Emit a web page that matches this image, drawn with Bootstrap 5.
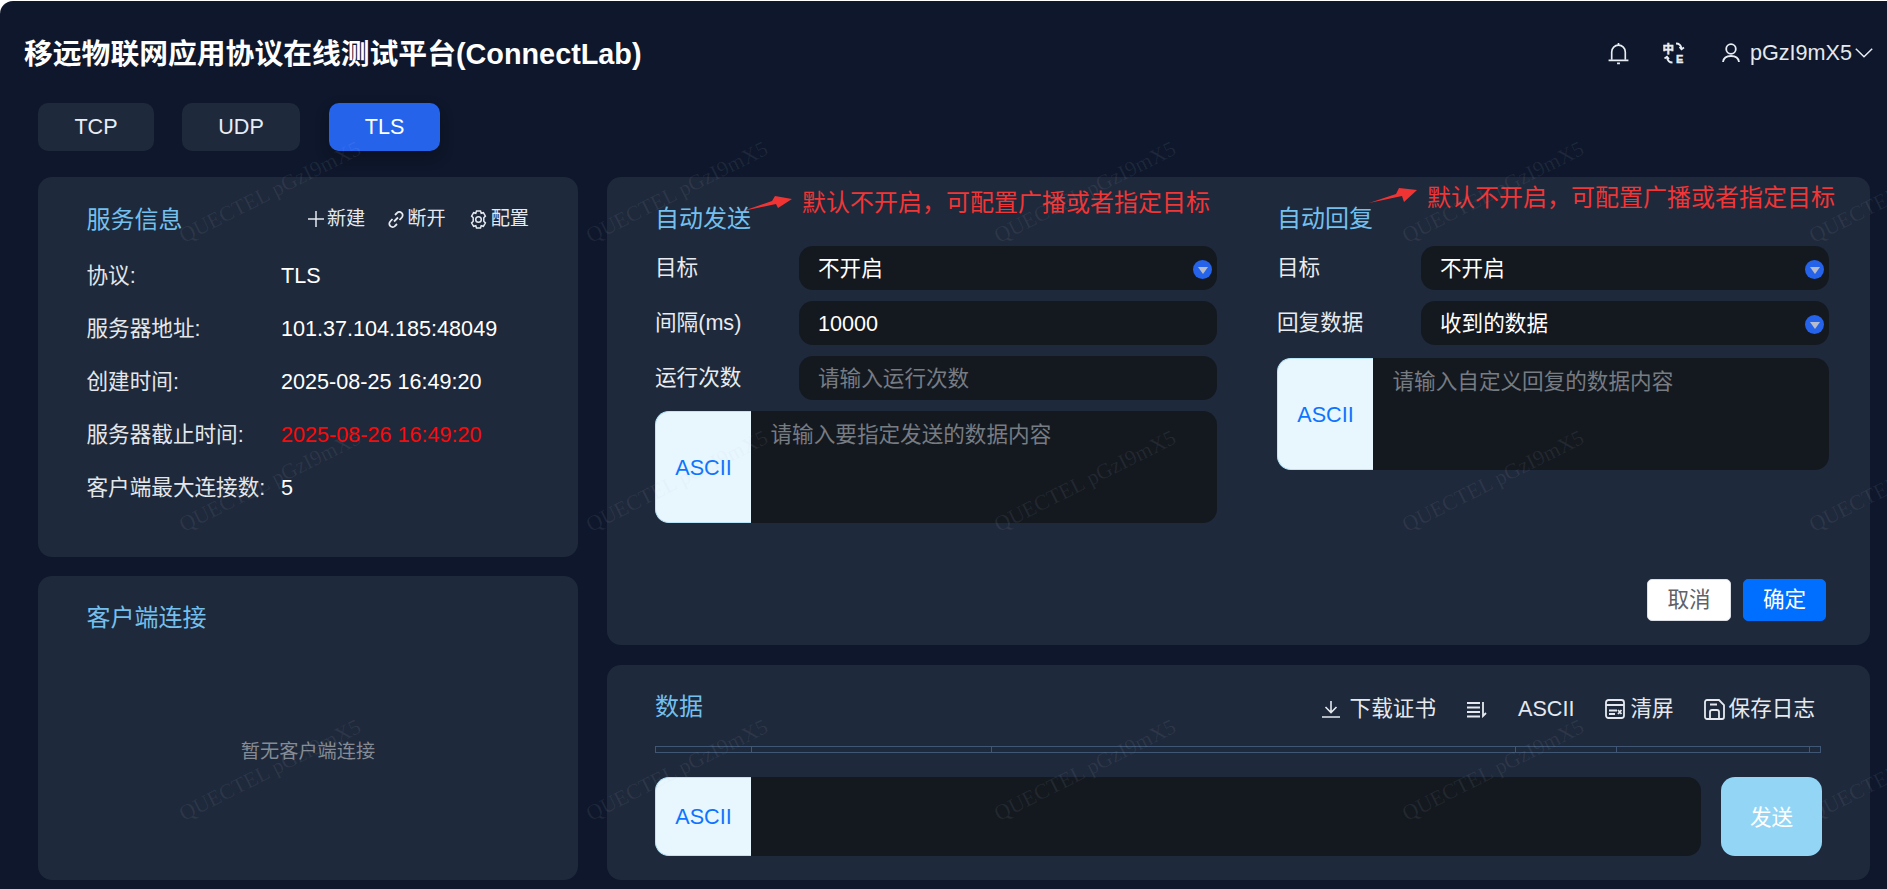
<!DOCTYPE html>
<html lang="zh-CN">
<head>
<meta charset="utf-8">
<title>ConnectLab</title>
<link href="https://cdn.jsdelivr.net/npm/bootstrap@5.3.0/dist/css/bootstrap.min.css" rel="stylesheet">
<style>
html,body{height:889px;overflow:hidden;background:#fff}
body{padding-top:1px;font-family:"Liberation Sans","Noto Sans CJK SC",sans-serif;font-size:21.6px;color:#e5e7eb}
.shell{position:relative;height:888px;background:#0e172b;border-top-left-radius:13px;overflow:hidden}
.topbar{height:102px;padding:2px 14px 0 24px}
.brand{font-size:28.8px;font-weight:700;color:#fff;line-height:1.2;margin:3px 0 0}
.topicons{color:#e8edf3;line-height:1}
.ic-bell{margin-right:34px}.ic-lang{margin-right:37px}.ic-user{margin-right:10px}.ic-chev{margin-left:3px}
.user-name{color:#e5e9ef}
.tabrow{height:48px;margin:0 0 26px 38px;gap:28px}
.proto{height:48px;border:0;border-radius:10px;background:#1e293b;color:#e8edf3;font-size:21.6px;padding:0;line-height:48px}
.proto.w1{width:116px}.proto.w2{width:118px}.proto.w3{width:111px;margin-left:1px;background:#2563eb;color:#fff;box-shadow:0 6px 14px rgba(0,0,0,.25)}
.proto:hover{background:#1e293b;color:#fff}.proto.w3:hover{background:#2563eb}
.stage{height:703px;padding:0 17px 0 38px;gap:29px}
.leftcol{width:540px;gap:19px}
.rightcol{gap:20px;min-width:0}
.panel{background:#1e293b;border-radius:14px;position:relative}
.p-info{height:380px;padding:28px 49px 0 48.5px}
.p-conn{height:304px;padding:27px 48.5px 10px}
.p-auto{height:468px;padding:27px 41px 0 48px}
.p-data{height:215px;padding:27px 49px 0 48px}
.heading{font-size:24px;line-height:30px;color:#73c0ee;margin:0;font-weight:400}
.acts{font-size:19.2px;gap:23px;color:#e5e9ef;line-height:30px;transform:translateY(-1px)}
.acts span.it{display:inline-flex;align-items:center;gap:3px}
.info-rows{margin-top:14px}
.info-row{height:53px;line-height:53px}
.info-k{width:194.5px;color:#e3e6ea}
.info-v{color:#fff}
.info-v.due{color:#fa0a0a}
.empty{color:#858b94;font-size:19.2px;padding-top:2px}
.col-a{width:562px}.col-b{width:552px}
.cols{gap:60px}
.formcol{position:relative}
.heading.gapped{margin-bottom:12px}
.field{height:44px;margin-bottom:11px}
.field-k{width:144px;color:#e8ebef;flex-shrink:0}
.slot{position:relative;flex:1;min-width:0}
.dark{height:44px;background:#141920!important;border:0!important;border-radius:14px!important;color:#fff!important;font-size:21.6px;padding:2px 40px 0 19px;box-shadow:none!important;background-image:none!important}
.dark::placeholder{color:#777c83;opacity:1}
.dot{position:absolute;right:5px;top:50%;width:19px;height:19px;margin-top:-8px;border-radius:50%;background:#2563eb;display:flex;align-items:center;justify-content:center;pointer-events:none}
.dot::after{content:"";width:0;height:0;border-left:5px solid transparent;border-right:5px solid transparent;border-top:7px solid #b6bccb;margin-top:1px}
.note{position:absolute;color:#f03636;font-size:24px;line-height:30px;white-space:nowrap}
.col-a .note{left:147px;top:-16px}
.col-b .note{left:150px;top:-21px}
.arrow{position:absolute;overflow:visible}
.col-a .arrow{left:88px;top:-8px}
.col-b .arrow{left:92px;top:-16px}
.compose{flex-wrap:nowrap}
.compose .mode{width:96px;justify-content:center;background:#e8f6fe;border:1px solid #b9e4f8;border-right:0;border-radius:14px 0 0 14px;color:#0d74ff;font-size:21.6px;padding:2px 0 0}
.compose .body-in{background:#141920!important;border:0;margin-left:0!important;border-radius:0 14px 14px 0!important;color:#fff;font-size:21.6px;padding:10px 19.5px;line-height:28px;resize:none;box-shadow:none}
.compose .body-in::placeholder{color:#777c83;opacity:1}
.h-a{height:112px}
.h-b{height:112px;margin-top:13px}
.btnrow{position:absolute;right:44px;top:402px;gap:12px}
.act-btn{height:42px;width:84px;padding:0;font-size:21.6px;line-height:40px;border-radius:5px}
.act-btn.no{background:#fff;border:1px solid #dcdfe6;color:#606266}
.act-btn.yes{width:83px;background:#006eff;border:1px solid #006eff;color:#fff}
.data-head{height:30px}
.toolbar{font-size:21.6px;color:#e5e9ef;line-height:30px;margin-right:6px;transform:translateY(2px)}
.toolbar .it{display:inline-flex;align-items:center}
.t1{gap:10px;margin-right:31px}.t2{margin-right:31px}.t3{margin-right:31px}.t4{gap:5px;margin-right:30px}.t5{gap:4px}
.strip{display:grid;grid-template-columns:96px 240px 523.5px 101.5px 193px 12px;height:7px;margin-top:24px;border:1px solid #3f5674;width:1166px}
.strip i{display:block;border-right:1px solid #3f5674}
.strip i:last-child{border-right:0}
.sendrow{margin-top:24px;height:79px;gap:20px;width:1167px}
.sendrow .compose{flex:1;height:79px;width:auto}
.sendbtn{width:101px;height:79px;padding:3px 0 0;background:#93d5f5;border:0;border-radius:14px;color:#fff;font-size:21.6px}
.sendbtn:hover,.sendbtn:disabled{background:#93d5f5;color:#fff;opacity:1}
.wm{position:absolute;inset:0;pointer-events:none;display:grid;grid-template-columns:repeat(5,407.6px);grid-template-rows:repeat(3,289px);padding:46.5px 0 0 66px;z-index:5;overflow:hidden}
.wm span{justify-self:center;align-self:center;white-space:nowrap;font-family:"Liberation Serif",serif;font-size:21.6px;color:rgba(190,200,215,.09);transform:rotate(-26.7deg)}
</style>
</head>
<body>
<div class="shell">
  <header class="topbar d-flex align-items-center justify-content-between">
    <h1 class="brand">移远物联网应用协议在线测试平台(ConnectLab)</h1>
    <div class="topicons d-flex align-items-center">
      <svg class="ic-bell" width="21" height="23" viewBox="0 0 20 22" fill="none" stroke="currentColor" stroke-width="1.6"><path d="M3.500 17V9.500a6.500 6.500 0 0 1 13 0V17"/><path d="M.5 17.500h19"/><path d="M10 1v2"/><path d="M8.600 20.500h2.800" stroke-width="1.800"/></svg>
      <svg class="ic-lang" width="22" height="22" viewBox="0 0 22 22" fill="none" stroke="currentColor" stroke-width="1.800"><text x="-.5" y="10.500" font-size="11.500" font-weight="700" fill="currentColor" stroke="currentColor" stroke-width=".5" font-family="Noto Sans CJK SC">中</text><text x="13" y="21" font-size="11" font-weight="700" fill="currentColor" stroke="currentColor" stroke-width=".4" font-family="Liberation Sans">E</text><path d="M13 1.500c3 0 5 2 5.500 5"/><path d="M16.500 5l2 2.200L21 5.500"/><path d="M9.500 20.500c-3 0-5-2-5.500-5"/><path d="M6 17l-2-2.200L1.500 16.500"/></svg>
      <svg class="ic-user" width="18" height="20" viewBox="0 0 18 20" fill="none" stroke="currentColor" stroke-width="1.800"><circle cx="9" cy="6" r="4.800"/><path d="M1 19c.5-4 3.500-6 8-6s7.500 2 8 6"/></svg>
      <span class="user-name">pGzI9mX5</span>
      <svg class="ic-chev" width="18" height="10" viewBox="0 0 18 10" fill="none" stroke="currentColor" stroke-width="1.500"><path d="M.8 .8 9 8.800 17.200 .8"/></svg>
    </div>
  </header>

  <div class="tabrow d-flex">
    <button class="btn proto w1" type="button">TCP</button>
    <button class="btn proto w2" type="button">UDP</button>
    <button class="btn proto w3" type="button">TLS</button>
  </div>

  <main class="stage d-flex">
    <section class="leftcol d-flex flex-column flex-shrink-0">
      <div class="panel p-info">
        <div class="d-flex justify-content-between align-items-center">
          <h2 class="heading">服务信息</h2>
          <div class="acts d-flex">
            <span class="it"><svg width="16" height="16" viewBox="0 0 16 16" stroke="currentColor" stroke-width="1.500"><path d="M8 0v16M0 8h16"/></svg>新建</span>
            <span class="it"><svg width="16" height="17" viewBox="0 0 16 17" fill="none" stroke="currentColor" stroke-width="1.800"><path d="M7 4l2-2a3.200 3.200 0 0 1 4.800 4.500L11.500 9"/><path d="M9 13l-2 2a3.200 3.200 0 0 1-4.800-4.500L4.500 8"/><path d="M10 6.500 6 10.500"/></svg>断开</span>
            <span class="it"><svg width="19" height="19" viewBox="0 0 19 19" fill="none" stroke="currentColor" stroke-width="1.500"><path d="M7.500 1h4l.7 2.300 2.200-.6 2 3.400-1.600 1.700v3.400l1.600 1.700-2 3.400-2.200-.6-.7 2.300h-4l-.7-2.300-2.200.6-2-3.400 1.600-1.700V7.800L2.600 6.100l2-3.400 2.200.6z"/><circle cx="9.500" cy="9.500" r="2.800"/></svg>配置</span>
          </div>
        </div>
        <div class="info-rows">
          <div class="info-row d-flex"><span class="info-k">协议:</span><span class="info-v">TLS</span></div>
          <div class="info-row d-flex"><span class="info-k">服务器地址:</span><span class="info-v">101.37.104.185:48049</span></div>
          <div class="info-row d-flex"><span class="info-k">创建时间:</span><span class="info-v">2025-08-25 16:49:20</span></div>
          <div class="info-row d-flex"><span class="info-k">服务器截止时间:</span><span class="info-v due">2025-08-26 16:49:20</span></div>
          <div class="info-row d-flex"><span class="info-k">客户端最大连接数:</span><span class="info-v">5</span></div>
        </div>
      </div>
      <div class="panel p-conn d-flex flex-column">
        <h2 class="heading">客户端连接</h2>
        <div class="empty flex-grow-1 d-flex align-items-center justify-content-center">暂无客户端连接</div>
      </div>
    </section>

    <section class="rightcol d-flex flex-column flex-grow-1">
      <div class="panel p-auto">
        <div class="cols d-flex">
          <div class="formcol col-a">
            <h2 class="heading gapped">自动发送</h2>
            <span class="note">默认不开启&#xFF0C;可配置广播或者指定目标</span>
            <svg class="arrow" width="50" height="16" viewBox="0 0 50 16"><path fill="#f03434" d="M0 15 29 5l3-5 17 3-14 9-2-4z"/></svg>
            <div class="field d-flex align-items-center"><span class="field-k">目标</span><div class="slot"><select class="form-select dark"><option>不开启</option></select><span class="dot"></span></div></div>
            <div class="field d-flex align-items-center"><span class="field-k">间隔(ms)</span><div class="slot"><input class="form-control dark" value="10000"></div></div>
            <div class="field d-flex align-items-center"><span class="field-k">运行次数</span><div class="slot"><input class="form-control dark" placeholder="请输入运行次数"></div></div>
            <div class="input-group compose h-a"><span class="input-group-text mode">ASCII</span><textarea class="form-control body-in" placeholder="请输入要指定发送的数据内容"></textarea></div>
          </div>
          <div class="formcol col-b">
            <h2 class="heading gapped">自动回复</h2>
            <span class="note">默认不开启&#xFF0C;可配置广播或者指定目标</span>
            <svg class="arrow" width="50" height="16" viewBox="0 0 50 16"><path fill="#f03434" d="M0 15 27 6l3-6 18 2-13 12-2-6z"/></svg>
            <div class="field d-flex align-items-center"><span class="field-k">目标</span><div class="slot"><select class="form-select dark"><option>不开启</option></select><span class="dot"></span></div></div>
            <div class="field d-flex align-items-center"><span class="field-k">回复数据</span><div class="slot"><select class="form-select dark"><option>收到的数据</option></select><span class="dot"></span></div></div>
            <div class="input-group compose h-b"><span class="input-group-text mode">ASCII</span><textarea class="form-control body-in" placeholder="请输入自定义回复的数据内容"></textarea></div>
          </div>
        </div>
        <div class="btnrow d-flex">
          <button class="btn act-btn no" type="button">取消</button>
          <button class="btn act-btn yes" type="button">确定</button>
        </div>
      </div>

      <div class="panel p-data">
        <div class="data-head d-flex justify-content-between align-items-center">
          <h2 class="heading">数据</h2>
          <div class="toolbar d-flex align-items-center">
            <span class="it t1"><svg width="18" height="18" viewBox="0 0 18 18" fill="none" stroke="currentColor" stroke-width="1.600"><path d="M9 1v11M3.500 7 9 12.500 14.500 7M0 17h18"/></svg>下载证书</span>
            <span class="it t2"><svg width="20" height="17" viewBox="0 0 20 17" fill="none" stroke="currentColor" stroke-width="1.800"><path d="M0 2h13M0 6.500h13M0 11h13M0 15.500h13"/><path d="M16 1v14l3-3"/></svg></span>
            <span class="it t3">ASCII</span>
            <span class="it t4"><svg width="20" height="20" viewBox="0 0 20 20" fill="none" stroke="currentColor" stroke-width="1.800"><rect x="1" y="1" width="18" height="18" rx="2.500"/><path d="M1 6h18M4 11.500h8M4 15h6"/><path d="M13 11l3.500 4M16.500 11 13 15"/></svg>清屏</span>
            <span class="it t5"><svg width="21" height="21" viewBox="0 0 21 21" fill="none" stroke="currentColor" stroke-width="1.800"><path d="M3 1h12l5 5v12a2 2 0 0 1-2 2H3a2 2 0 0 1-2-2V3a2 2 0 0 1 2-2z"/><path d="M6 20v-7a2 2 0 0 1 2-2h5a2 2 0 0 1 2 2v7M6 5.500h7"/></svg>保存日志</span>
          </div>
        </div>
        <div class="strip"><i></i><i></i><i></i><i></i><i></i><i></i></div>
        <div class="sendrow d-flex">
          <div class="input-group compose"><span class="input-group-text mode">ASCII</span><textarea class="form-control body-in"></textarea></div>
          <button class="btn sendbtn" type="button">发送</button>
        </div>
      </div>
    </section>
  </main>

  <div class="wm" aria-hidden="true">
    <span>QUECTEL pGzI9mX5</span><span>QUECTEL pGzI9mX5</span><span>QUECTEL pGzI9mX5</span><span>QUECTEL pGzI9mX5</span><span>QUECTEL pGzI9mX5</span>
    <span>QUECTEL pGzI9mX5</span><span>QUECTEL pGzI9mX5</span><span>QUECTEL pGzI9mX5</span><span>QUECTEL pGzI9mX5</span><span>QUECTEL pGzI9mX5</span>
    <span>QUECTEL pGzI9mX5</span><span>QUECTEL pGzI9mX5</span><span>QUECTEL pGzI9mX5</span><span>QUECTEL pGzI9mX5</span><span>QUECTEL pGzI9mX5</span>
  </div>
</div>
<script src="https://cdn.jsdelivr.net/npm/bootstrap@5.3.0/dist/js/bootstrap.bundle.min.js"></script>
</body>
</html>
